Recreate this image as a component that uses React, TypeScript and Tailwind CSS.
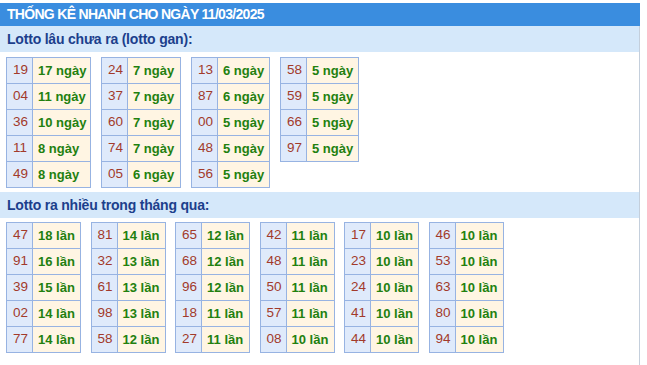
type Pair = [string, string];

const gan: { w: string; rows: Pair[] }[] = [
  { w: 'w-[57px]', rows: [['19', '17'], ['04', '11'], ['36', '10'], ['11', '8'], ['49', '8']] },
  { w: 'w-[52px]', rows: [['24', '7'], ['37', '7'], ['60', '7'], ['74', '7'], ['05', '6']] },
  { w: 'w-[51px]', rows: [['13', '6'], ['87', '6'], ['00', '5'], ['48', '5'], ['56', '5']] },
  { w: 'w-[51px]', rows: [['58', '5'], ['59', '5'], ['66', '5'], ['97', '5']] },
];

const nhieu: Pair[][] = [
  [['47', '18'], ['91', '16'], ['39', '15'], ['02', '14'], ['77', '14']],
  [['81', '14'], ['32', '13'], ['61', '13'], ['98', '13'], ['58', '12']],
  [['65', '12'], ['68', '12'], ['96', '12'], ['18', '11'], ['27', '11']],
  [['42', '11'], ['48', '11'], ['50', '11'], ['57', '11'], ['08', '10']],
  [['17', '10'], ['23', '10'], ['24', '10'], ['41', '10'], ['44', '10']],
  [['46', '10'], ['53', '10'], ['63', '10'], ['80', '10'], ['94', '10']],
];

function StatTable({ rows, unit, w }: { rows: Pair[]; unit: string; w: string }) {
  return (
    <table className="border-collapse self-start">
      <tbody>
        {rows.map(([num, count]) => (
          <tr key={num}>
            <td className="border border-[#97b3e2] bg-[#dfeafb] p-0">
              <div className="w-[25px] h-[25px] flex items-center pl-[6px] text-[13.5px] text-[#a23a2b]">{num}</div>
            </td>
            <td className="border border-[#97b3e2] bg-[#fff5e3] p-0">
              <div className={`${w} h-[25px] flex items-center pl-[5px] text-[13px] font-bold text-[#22800f] whitespace-nowrap`}>
                {count} {unit}
              </div>
            </td>
          </tr>
        ))}
      </tbody>
    </table>
  );
}

function SectionTitle({ children }: { children: string }) {
  return (
    <div className="h-[26px] bg-[#d5e8fa] pl-[7px] flex items-center text-[14px] font-bold tracking-[-0.2px] text-[#1c3f8c]">
      {children}
    </div>
  );
}

export default function App() {
  return (
    <div className="w-[647px] h-[365px] bg-white pt-[3px] overflow-hidden" style={{ fontFamily: '"Liberation Sans", Arial, sans-serif' }}>
      <div className="w-[640px] h-[23px] bg-[#3a8ddf] pl-[7px] flex items-center text-[14px] font-bold tracking-[-0.7px] text-white">
        THỐNG KÊ NHANH CHO NGÀY 11/03/2025
      </div>
      <div className="w-[640px] h-[400px] border-r border-[#c4cfdc]">
        <SectionTitle>Lotto lâu chưa ra (lotto gan):</SectionTitle>
        <div className="flex gap-[10px] pl-[6px] pt-[5px] pb-[4px]">
          {gan.map((t, i) => (
            <StatTable key={i} rows={t.rows} unit="ngày" w={t.w} />
          ))}
        </div>
        <SectionTitle>Lotto ra nhiều trong tháng qua:</SectionTitle>
        <div className="flex gap-[9.5px] pl-[6px] pt-[4px]">
          {nhieu.map((rows, i) => (
            <StatTable key={i} rows={rows} unit="lần" w="w-[47px]" />
          ))}
        </div>
      </div>
    </div>
  );
}
